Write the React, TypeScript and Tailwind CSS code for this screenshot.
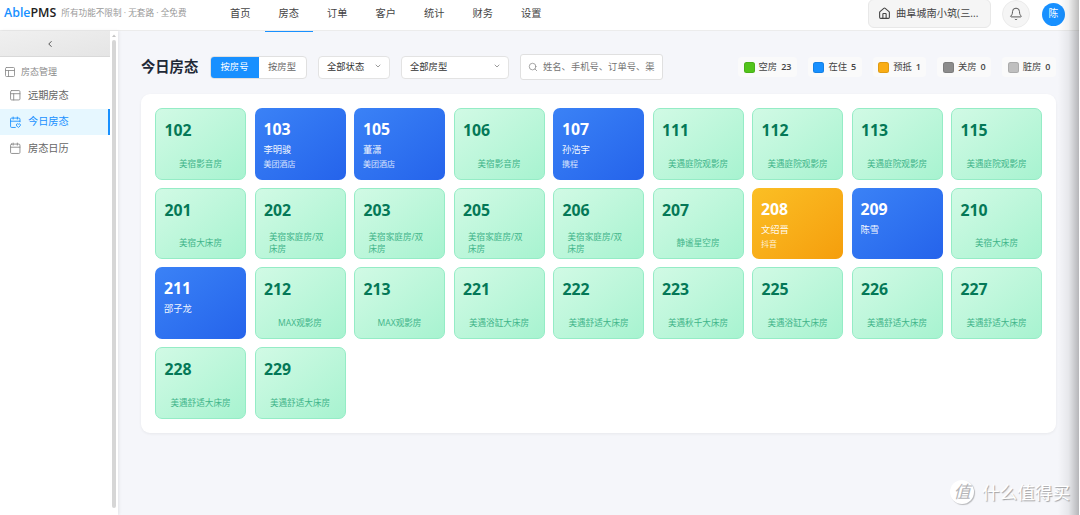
import { Bell, Calendar, CalendarHeart, ChevronDown, ChevronLeft, House, PanelsTopLeft, Search } from 'lucide-react';
import clsx from 'clsx';

type Room = {
  no: string;
  type?: string;
  guest?: string;
  channel?: string;
  status?: 'free' | 'occupied' | 'arriving';
};

const rooms: Room[] = [
  { no: '102', type: '美宿影音房' },
  { no: '103', guest: '李明骏', channel: '美团酒店', status: 'occupied' },
  { no: '105', guest: '董潇', channel: '美团酒店', status: 'occupied' },
  { no: '106', type: '美宿影音房' },
  { no: '107', guest: '孙浩宇', channel: '携程', status: 'occupied' },
  { no: '111', type: '美遇庭院观影房' },
  { no: '112', type: '美遇庭院观影房' },
  { no: '113', type: '美遇庭院观影房' },
  { no: '115', type: '美遇庭院观影房' },
  { no: '201', type: '美宿大床房' },
  { no: '202', type: '美宿家庭房/双床房' },
  { no: '203', type: '美宿家庭房/双床房' },
  { no: '205', type: '美宿家庭房/双床房' },
  { no: '206', type: '美宿家庭房/双床房' },
  { no: '207', type: '静谧星空房' },
  { no: '208', guest: '文绍晋', channel: '抖音', status: 'arriving' },
  { no: '209', guest: '陈雪', status: 'occupied' },
  { no: '210', type: '美宿大床房' },
  { no: '211', guest: '邵子龙', status: 'occupied' },
  { no: '212', type: 'MAX观影房' },
  { no: '213', type: 'MAX观影房' },
  { no: '221', type: '美遇浴缸大床房' },
  { no: '222', type: '美遇舒适大床房' },
  { no: '223', type: '美遇秋千大床房' },
  { no: '225', type: '美遇浴缸大床房' },
  { no: '226', type: '美遇舒适大床房' },
  { no: '227', type: '美遇舒适大床房' },
  { no: '228', type: '美遇舒适大床房' },
  { no: '229', type: '美遇舒适大床房' },
];

const navItems = ['首页', '房态', '订单', '客户', '统计', '财务', '设置'];

const legends = [
  { label: '空房', count: 23, color: 'bg-[#52c41a]' },
  { label: '在住', count: 5, color: 'bg-[#1890ff]' },
  { label: '预抵', count: 1, color: 'bg-[#faad14]' },
  { label: '关房', count: 0, color: 'bg-[#8c8c8c]' },
  { label: '脏房', count: 0, color: 'bg-[#bfbfbf]' },
];

const menuItems = [
  { label: '远期房态', icon: PanelsTopLeft },
  { label: '今日房态', icon: CalendarHeart, active: true },
  { label: '房态日历', icon: Calendar },
];

function Header() {
  return (
    <header className="flex h-[31px] shrink-0 border-b border-[#ececec] bg-white">
      <div className="flex w-[216px] items-center pl-1 pb-[3px]">
        <span className="text-[12.4px] font-semibold text-[#222]">
          <span className="text-[#1890ff]">Able</span>PMS
        </span>
        <span className="ml-[5px] text-[8.6px] text-[#999]">所有功能不限制 · 无套路 · 全免费</span>
      </div>
      <nav className="flex">
        {navItems.map(item => (
          <a
            key={item}
            className={clsx(
              'flex h-8 w-[48.5px] items-center justify-center border-b-[1.5px] pb-[3px] text-[10.2px] text-[#444]',
              item === '房态' ? 'border-[#1890ff]' : 'border-transparent'
            )}
          >
            {item}
          </a>
        ))}
      </nav>
      <div className="ml-auto flex items-start pr-[15px]">
        <div className="-mt-px flex h-[29px] w-[123px] items-center rounded-md border border-[#e8e8e8] bg-[#f5f5f5] pl-[9px] text-[10.2px] text-[#444]">
          <House size={13} strokeWidth={2} className="mr-[5px] text-[#444]" />
          曲阜城南小筑(三...
        </div>
        <div className="ml-[11px] flex size-7 items-center justify-center rounded-full border border-[#ebebeb] bg-[#f5f5f5]">
          <Bell size={14} strokeWidth={1.7} className="text-[#555]" />
        </div>
        <div className="mt-[2.5px] ml-[12px] flex size-[23px] items-center justify-center rounded-full bg-[#1890ff] text-[9.8px] text-white">
          陈
        </div>
      </div>
    </header>
  );
}

function Sidebar() {
  return (
    <aside className="flex w-[118px] shrink-0 bg-white shadow-[1px_0_3px_rgba(0,0,0,0.08)]">
      <div className="w-[110px]">
        <button className="flex h-[26px] w-full items-center justify-center border-b border-[#d9d9d9] bg-linear-to-br from-[#f0f0f0] to-[#e5e5e5] pr-2.5">
          <ChevronLeft size={10} strokeWidth={2.4} className="text-[#555]" />
        </button>
        <div className="flex h-[25px] items-center pt-[5px] pl-[4px] text-[9px] text-[#8a8a8a]">
          <PanelsTopLeft size={12} strokeWidth={1.7} className="mr-[5px]" />
          房态管理
        </div>
        <div>
          {menuItems.map(({ label, icon: Icon, active }) => (
            <div
              key={label}
              className={clsx(
                'flex h-[26.7px] items-center border-r-2 pl-[9px] text-[10.2px]',
                active ? 'border-[#1890ff] bg-[#e6f7ff] text-[#1890ff]' : 'border-transparent text-[#666]'
              )}
            >
              <Icon size={12.5} strokeWidth={1.7} className={clsx('mr-[6.5px]', !active && 'text-[#888]')} />
              {label}
            </div>
          ))}
        </div>
      </div>
      <div className="flex w-2 flex-col items-center pt-[3px]">
        <svg width="4" height="3" viewBox="0 0 4 3">
          <path d="M0 3L2 0.5L4 3Z" fill="#c4c4c4" />
        </svg>
        <div className="mt-[3px] h-[468px] w-1 rounded-full bg-[#d6d6d6]" />
      </div>
    </aside>
  );
}

function Select({ label, className }: { label: string; className: string }) {
  return (
    <div
      className={clsx(
        'flex h-[23px] items-center justify-between rounded-[4px] border border-[#e3e3e3] bg-white pr-[7px] pl-2 text-[9.3px] text-[#333]',
        className
      )}
    >
      {label}
      <ChevronDown size={8} strokeWidth={2.2} className="-mt-0.5 text-[#777]" />
    </div>
  );
}

function Toolbar() {
  return (
    <div className="flex h-[26px] items-center">
      <h1 className="w-[68.5px] text-[14.3px] font-bold text-[#1f2937]">今日房态</h1>
      <div className="flex h-[23px] w-[97px] overflow-hidden rounded-[4px] border border-[#e0e0e0] bg-white text-[9.3px]">
        <button className="w-12 bg-[#1890ff] text-white">按房号</button>
        <button className="flex-1 text-[#666]">按房型</button>
      </div>
      <Select label="全部状态" className="ml-[11.5px] w-[72px]" />
      <Select label="全部房型" className="ml-[11px] w-[108px]" />
      <div className="ml-[11px] flex h-[26px] w-[143px] items-center rounded-[3px] border border-[#e0e0e0] bg-white pl-[7px] text-[9.3px] text-[#757575]">
        <Search size={10} strokeWidth={1.8} className="mr-[5px] text-[#888]" />
        <span className="mb-px">姓名、手机号、订单号、渠</span>
      </div>
      <div className="ml-auto flex gap-[11px]">
        {legends.map(({ label, count, color }) => (
          <div key={label} className="flex h-5 items-center rounded-[4px] bg-[#fafafa] px-[5.5px] text-[9.3px] text-[#444]">
            <span className={clsx('mr-[4px] size-[11px] rounded-[2.5px] border border-black/10', color)} />
            {label}
            <span className="ml-[4px] text-[9px] font-semibold">{count}</span>
          </div>
        ))}
      </div>
    </div>
  );
}

function RoomCard({ no, type, guest, channel, status = 'free' }: Room) {
  if (status === 'free') {
    return (
      <div className="flex h-[71.7px] flex-col rounded-[7px] border border-[#95ecc6] bg-linear-to-br from-[#d1fae5] to-[#a7f3d0] pt-[11px]">
        <div className="pl-[8.5px] text-[15.8px] leading-5 font-bold text-[#047857]">{no}</div>
        <div className="flex h-[26px] mt-[10.5px] items-center justify-center text-[8.6px] leading-3 text-[#3fb489]">
          <span className="max-w-[62px] break-all">{type}</span>
        </div>
      </div>
    );
  }
  return (
    <div
      className={clsx(
        'h-[71.7px] rounded-[7px] bg-linear-to-br pt-[11px] pl-[9px] text-white',
        status === 'arriving' ? 'from-[#fbbf24] to-[#f59e0b]' : 'from-[#3b82f6] to-[#2563eb]'
      )}
    >
      <div className="text-[15.8px] leading-5 font-bold">{no}</div>
      <div className="mt-[5px] text-[9.3px] leading-3 text-white/95">{guest}</div>
      <div className="mt-[2px] text-[8px] leading-3 text-white/80">{channel}</div>
    </div>
  );
}

export default function App() {
  return (
    <div className="relative flex h-[515px] w-[1080px] flex-col overflow-hidden bg-[#f5f6fa] font-['Open_Sans','Noto_Sans_CJK_SC',sans-serif] whitespace-nowrap">
      <Header />
      <div className="flex min-h-0 flex-1">
        <Sidebar />
        <main className="flex-1 pt-[23px] pr-6 pl-[23px]">
          <Toolbar />
          <div className="mt-[14px] grid h-[339px] grid-cols-9 content-start gap-x-[8.5px] gap-y-[8px] rounded-[9px] bg-white p-[14px] whitespace-normal shadow-[0_1px_3px_rgba(0,0,0,0.06)]">
            {rooms.map(room => (
              <RoomCard key={room.no} {...room} />
            ))}
          </div>
        </main>
      </div>

      {/* Shade along the right edge */}
      <div className="absolute inset-y-0 right-0 flex w-[22px]">
        <div className="flex-1 bg-linear-to-r from-black/0 via-black/6 to-black/26" />
        <div className="w-px bg-white/80" />
      </div>

      {/* Watermark */}
      <div className="absolute top-[480px] left-[950px] flex items-center text-white">
        <span className="flex size-6 items-center justify-center rounded-full bg-white text-[17px] text-[#b5b5b8] italic shadow-[1px_1px_1px_rgba(0,0,0,0.25)]">
          值
        </span>
        <span className="ml-2 text-[17.6px] leading-6 [text-shadow:1px_1px_1px_rgba(0,0,0,0.35)]">什么值得买</span>
      </div>
    </div>
  );
}
